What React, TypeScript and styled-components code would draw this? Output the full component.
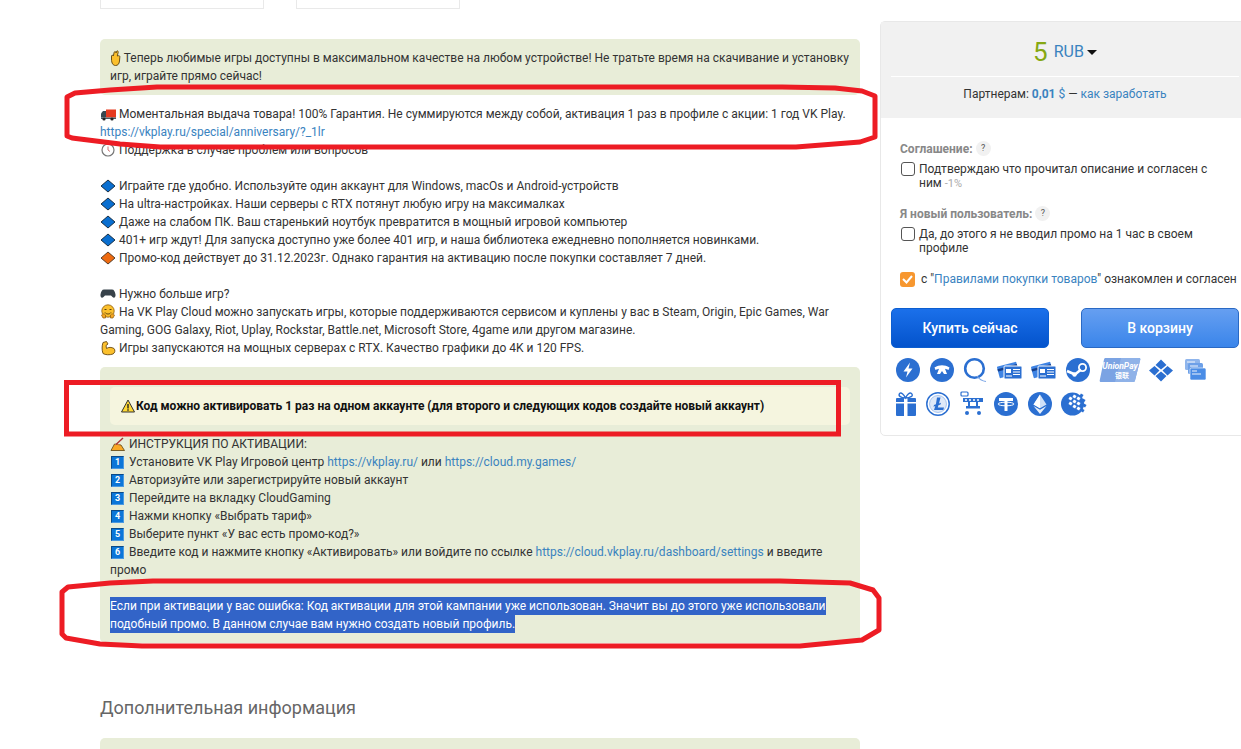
import React from "react";
import styled, { createGlobalStyle } from "styled-components";

const GlobalStyle = createGlobalStyle`
  html, body {
    margin: 0;
    padding: 0;
    background: #fff;
  }
  body {
    font-family: Roboto, "Liberation Sans", sans-serif;
    font-size: 12px;
    line-height: 18px;
    color: #333;
  }
`;

const Page = styled.div`
  position: relative;
  width: 1241px;
  height: 749px;
  overflow: hidden;
  display: flex;
  align-items: flex-start;
  gap: 20px;
  padding-left: 100px;
  box-sizing: border-box;
`;

const Main = styled.main`
  flex: 0 0 760px;
`;

const Tabs = styled.div`
  display: flex;
  gap: 32px;
  height: 9px;
  margin-bottom: 30px;
`;

const Tab = styled.div`
  width: 164px;
  box-sizing: border-box;
  border: 1px solid #e9e9e9;
  border-top: 0;
`;

const GreenBox = styled.div`
  background: #e8edd8;
  border-radius: 5px;
  padding: 10px;
  min-height: 18px;
`;

const Plain = styled.div`
  margin: 10px 0;
`;

const Line = styled.div`
  min-height: 18px;
`;

const A = styled.a`
  color: #3a83bf;
  text-decoration: none;
`;

const Notice = styled.div`
  background: #f5f5df;
  border-radius: 5px;
  padding: 10px;
  margin: 10px 0;
  font-weight: 700;
  color: #111;
`;

const Selected = styled.span`
  display: block;
  width: fit-content;
  background: #3264c8;
  color: #fff;
`;

const Heading = styled.h3`
  margin: 53px 0 18px;
  font-size: 18px;
  line-height: 24px;
  font-weight: 400;
  color: #666;
`;

const Keycap = styled.span`
  display: inline-block;
  width: 13px;
  height: 13px;
  margin: 3px 2px 0 1px;
  box-sizing: border-box;
  background: #0b76d8;
  border: 1px solid #0c4a86;
  border-right-color: #4b99e0;
  border-bottom-color: #4b99e0;
  color: #fff;
  font-size: 9px;
  font-weight: 700;
  line-height: 11px;
  text-align: center;
  vertical-align: top;
`;

const EmojiSvg = styled.svg<{ $narrow?: boolean }>`
  display: inline-block;
  width: ${(p) => (p.$narrow ? 11 : 16)}px;
  height: 16px;
  vertical-align: -4px;
`;

const Side = styled.aside`
  flex: 0 0 370px;
  margin-top: 21px;
  box-sizing: border-box;
  height: 415px;
  border: 1px solid #e8e8e8;
  border-radius: 5px;
`;

const SideHead = styled.div`
  background: #f1f1f1;
  padding: 0 10px;
  height: 96px;
  text-align: center;
`;

const PriceRow = styled.div`
  display: flex;
  align-items: center;
  justify-content: center;
  box-sizing: border-box;
  height: 55px;
  padding-top: 6px;
  border-bottom: 1px solid #fff;
`;

const Price = styled.span`
  font-size: 26px;
  color: #86a813;
  line-height: 30px;
  margin-right: 6px;
`;

const Currency = styled.span`
  font-size: 16px;
  color: #3a83bf;
`;

const Caret = styled.span`
  width: 0;
  height: 0;
  margin-left: 3px;
  border-left: 5px solid transparent;
  border-right: 5px solid transparent;
  border-top: 5px solid #111;
`;

const Partners = styled.div`
  padding-top: 8px;
  line-height: 18px;
`;

const Bold = styled.b`
  color: #3a83bf;
  font-weight: 700;
`;

const SideBody = styled.div`
  padding: 23px 0 0 19px;
`;

const OptionTitle = styled.div`
  display: flex;
  align-items: center;
  gap: 3px;
  height: 15px;
  font-size: 12px;
  font-weight: 700;
  color: #888;
  margin-bottom: 6px;
`;

const Hint = styled.span`
  width: 15px;
  height: 15px;
  border-radius: 50%;
  background: #f1f1f1;
  color: #555;
  font-size: 9px;
  font-weight: 400;
  line-height: 15px;
  text-align: center;
`;

const Option = styled.div`
  display: flex;
  gap: 4px;
  width: 320px;
  line-height: 14px;
  margin-bottom: 15px;
`;

const Box = styled.span`
  flex: 0 0 14px;
  height: 14px;
  margin-left: 1px;
  box-sizing: border-box;
  border: 1px solid #555;
  border-radius: 3px;
  background: #fff;
`;

const Muted = styled.span`
  color: #aaa;
  font-size: 11px;
`;

const AcceptRow = styled.div`
  display: flex;
  align-items: center;
  gap: 6px;
  margin-top: 17px;
  white-space: nowrap;
  line-height: 15px;
`;

const Orange = styled.span`
  flex: 0 0 15px;
  height: 15px;
  border-radius: 3px;
  background: #f7972f;
  display: flex;
  align-items: center;
  justify-content: center;
`;

const Buttons = styled.div`
  display: flex;
  gap: 32px;
  margin: 21px 0 0 -9px;
`;

const Button = styled.button<{ $light?: boolean }>`
  width: 158px;
  height: 40px;
  border-radius: 5px;
  border: 1px solid ${(p) => (p.$light ? "#2a69c4" : "#0c5ed0")};
  background: ${(p) =>
    p.$light
      ? "linear-gradient(#669ff1, #3a85ea)"
      : "linear-gradient(#1b70ea, #0353cc)"};
  color: #fff;
  font-family: Roboto, "Liberation Sans", sans-serif;
  font-size: 14px;
  font-weight: 500;
  padding: 0;
`;

const Pay = styled.div`
  display: flex;
  flex-wrap: wrap;
  row-gap: 10px;
  width: 340px;
  margin: 10px 0 0 -4px;
`;

const PayIcon = styled.svg<{ $wide?: boolean }>`
  display: block;
  width: ${(p) => (p.$wide ? 48 : 34)}px;
  height: 24px;
  flex: none;
  overflow: visible;
`;

const Annotations = styled.svg`
  position: absolute;
  left: 0;
  top: 0;
  width: 1241px;
  height: 749px;
  pointer-events: none;
`;

const emojis: Record<string, React.ReactNode> = {
  hand: (
    <path
      d="M4 9V6c0-1 1.500-1 1.800 0L6.500 3c.2-2 2-2 2 0L9 1.500c.5-1.200 2-.6 1.700.8L9.800 6l1.200-.3c1-.2 1.500.5 1.300 1.500L12 11c-.3 3-1.700 4.500-4 4.500S4 13.500 4 9z"
      fill="#fbc02d"
      stroke="#5b4210"
      strokeWidth="0.9"
    />
  ),
  truck: (
    <>
      <rect x="6" y="3.500" width="10" height="8" fill="#e5391f" />
      <path d="M1 7.500 3 5h3v6.500H1z" fill="#37474f" />
      <rect x="1" y="11.500" width="15" height="1.500" fill="#455a64" />
      <circle cx="4" cy="13" r="1.600" fill="#222" />
      <circle cx="12" cy="13" r="1.600" fill="#222" />
    </>
  ),
  clock: (
    <>
      <circle cx="8" cy="8" r="6" fill="#fff" stroke="#777" strokeWidth="1.200" />
      <path d="M8 4.500V8l2 1.500" fill="none" stroke="#c77" strokeWidth="1" />
    </>
  ),
  blue: <path d="M8 2 15 8l-7 6L1 8z" fill="#0a6fd0" stroke="#123" strokeWidth="0.9" />,
  orange: <path d="M8 2 15 8l-7 6L1 8z" fill="#ee6a10" stroke="#432" strokeWidth="0.9" />,
  pad: (
    <path
      d="M4 3.500h8c2 0 3 2 3.500 5 .4 3-1.500 4-3 2.500L11 9.500H5L3.500 11C2 12.500.1 11.500.5 8.500 1 5.500 2 3.500 4 3.500z"
      fill="#37424a"
    />
  ),
  hug: (
    <>
      <circle cx="8" cy="7" r="6.200" fill="#fbc02d" stroke="#8a5a10" strokeWidth="0.8" />
      <path d="M4.500 5.500h2M9.500 5.500h2" stroke="#5b4210" strokeWidth="1" />
      <path d="M5 8.500c1.500 2 4.500 2 6 0" fill="none" stroke="#5b4210" strokeWidth="1" />
      <path
        d="M1.500 11c1-1.500 3-1.500 4 0v3H3zM14.500 11c-1-1.500-3-1.500-4 0v3H13z"
        fill="#f5a623"
        stroke="#8a5a10"
        strokeWidth="0.7"
      />
    </>
  ),
  arm: (
    <path
      d="M3 2.500 6.500 1.500 8 4 6 5.500 6.500 8.500C8.500 7 11.500 7 14 8.500c1.500 1.500 1 4.500-1 5.500-3.500 1.200-7.500 1-10-.5C1.800 10 1.800 6 3 2.500z"
      fill="#fbc02d"
      stroke="#6b4a10"
      strokeWidth="0.9"
    />
  ),
  warn: (
    <>
      <path d="M8 2 14.500 14H1.500z" fill="#fdd835" stroke="#333" strokeWidth="1" strokeLinejoin="round" />
      <path d="M8 6v4.500M8 11.300v1.500" stroke="#222" strokeWidth="1.400" />
    </>
  ),
  write: (
    <>
      <path d="M1 14.500 4.500 8l6.500 1 3.500 5.500z" fill="#f9a825" stroke="#5b4210" strokeWidth="0.8" />
      <path d="M5 9c2-1 3-1 5 .5" fill="none" stroke="#d84" strokeWidth="1" />
      <path d="M6 8.500 13 2" stroke="#a33" strokeWidth="1.400" />
    </>
  ),
};

const Emoji = ({ name }: { name: string }) => (
  <EmojiSvg viewBox={name === "hand" ? "2.500 0 11 16" : "0 0 16 16"} $narrow={name === "hand"}>
    {emojis[name]}
  </EmojiSvg>
);

const blue = "#2b6fd1";

const Cards = () => (
  <>
    <g transform="rotate(-15 10 12)">
      <rect x="0" y="6" width="20" height="12" rx="1" fill="#3f84e4" />
      <rect x="0" y="8.500" width="20" height="2.500" fill="#163f8a" />
    </g>
    <rect x="6" y="8" width="18" height="13" rx="1" fill={blue} stroke="#fff" strokeWidth="1" />
    <rect x="8" y="11" width="5" height="4" fill="#fff" />
    <path d="M15 11.500h7M15 14h7M15 16.500h7M8 18h6" stroke="#fff" strokeWidth="1" />
  </>
);

const moneyDots: [number, number, boolean][] = [
  [8, 5, true],
  [12, 3, true],
  [16, 5, true],
  [8, 10, true],
  [12, 8, true],
  [16, 10, true],
  [12, 13, true],
  [16, 15, true],
  [19, 2, false],
  [21, 7, false],
  [22, 12, false],
  [20, 17, false],
];

const payIcons: { wide?: boolean; body: React.ReactNode }[] = [
  {
    body: (
      <>
        <circle cx="12" cy="12" r="12" fill={blue} />
        <path d="M14 4.500 7.500 13.500h4L10 19.500l6.500-9h-4z" fill="#fff" />
      </>
    ),
  },
  {
    body: (
      <>
        <circle cx="12" cy="12" r="12" fill={blue} />
        <path
          d="M4.500 9.500c5-3 10-3 15 0l-1 2.500c-1.500-.8-2.500-1.200-3.500-1.300L17 16h-3l-2-3-2 3H7l2-5.300c-1 .1-2 .5-3.500 1.300z"
          fill="#fff"
        />
      </>
    ),
  },
  {
    body: (
      <>
        <circle cx="10.500" cy="10.500" r="9.300" fill="none" stroke={blue} strokeWidth="2.600" />
        <path d="M13 18c2 3 5 5 9 5.500" fill="none" stroke="#7ba6e6" strokeWidth="1.200" />
      </>
    ),
  },
  { body: <Cards /> },
  { body: <Cards /> },
  {
    body: (
      <>
        <circle cx="12" cy="12" r="12" fill={blue} />
        <path d="M1 13 9 16.500l6-5" fill="none" stroke="#fff" strokeWidth="2.600" />
        <circle cx="16.500" cy="9.500" r="3.600" fill="none" stroke="#fff" strokeWidth="1.800" />
        <circle cx="8.500" cy="16.500" r="2.200" fill="#fff" />
      </>
    ),
  },
  {
    wide: true,
    body: (
      <g transform="translate(-5 0)">
        <path
          d="M10.500 0H44c1 0 1.500.6 1.300 1.500L40 22.500c-.3 1-1 1.500-2 1.500H6c-1 0-1.500-.6-1.300-1.500L9 1.500C9.200.6 9.700 0 10.500 0z"
          fill="#7ba3e3"
        />
        <path d="M26 0H44c1 0 1.500.6 1.300 1.500L40 22.500c-.3 1-1 1.500-2 1.500H20z" fill="#8fb2e8" />
        <text x="25" y="11" fontFamily="Roboto, sans-serif" fontSize="8.500" fontStyle="italic" fontWeight="700" fill="#fff" textAnchor="middle">
          UnionPay
        </text>
        <text x="27" y="20" fontFamily="'Noto Sans CJK SC', sans-serif" fontSize="7" fontWeight="700" fill="#fff" textAnchor="middle">
          银联
        </text>
      </g>
    ),
  },
  {
    body: (
      <g transform="translate(1 0)">
        <path
          d="M12 1.500 17.500 7 12 11.500 6.500 7zM5.500 8 10.500 12.500 5.500 17.500 0 12.500zM18.500 8 24 12.500 18.500 17.500 13.500 12.500zM12 13.500 17.500 18 12 23.500 6.500 18z"
          fill={blue}
        />
      </g>
    ),
  },
  {
    body: (
      <g transform="translate(0 1)">
        <rect x="3" y="0" width="15" height="11" rx="1.500" fill="#8fb5ec" />
        <rect x="6" y="4" width="15" height="11" rx="1.500" fill="#6da0e8" />
        <rect x="8" y="9" width="16" height="12" rx="1.500" fill="#4a8de6" stroke="#fff" strokeWidth="0.6" />
        <path d="M10 12h5M10 15h9M5 3h8M8 7h8" stroke="#fff" strokeWidth="0.9" />
      </g>
    ),
  },
  {
    body: (
      <>
        <rect x="0" y="6" width="20" height="18" rx="1" fill={blue} />
        <rect x="0" y="10" width="20" height="1.500" fill="#fff" />
        <rect x="8" y="6" width="3.500" height="18" fill="#fff" />
        <path
          d="M9.500 6C5 6 2 4 3.500 1.500 5.500 0 8 3 9.500 6c1.500-3 4-6 6-4.500C18 4 14 6 9.500 6z"
          fill="none"
          stroke={blue}
          strokeWidth="1.400"
        />
      </>
    ),
  },
  {
    body: (
      <g transform="translate(-4 0)">
        <circle cx="12" cy="12" r="11.200" fill="#fff" stroke={blue} strokeWidth="1.500" />
        <circle cx="12" cy="12" r="8.500" fill="#dfe9f8" stroke="#7ba6e6" strokeWidth="0.6" />
        <path d="M11 5.500h3.500L13 11.500l2-.8-.5 1.800-2.100.8-.6 2.200H18l-.7 2.500H8l1.300-4-1.800.7.500-1.700 1.900-.8z" fill={blue} />
      </g>
    ),
  },
  {
    body: (
      <g transform="translate(-6 0)">
        <rect x="3" y="0" width="7" height="4" rx="1" fill="none" stroke={blue} strokeWidth="1.200" />
        <rect x="5" y="6" width="20" height="4" fill={blue} />
        <path d="M7 8h2M11 8h2M15 8h2M19 8h2" stroke="#fff" strokeWidth="1.300" />
        <rect x="8" y="14" width="14" height="2.500" fill={blue} />
        <rect x="10" y="10" width="2" height="4" fill={blue} />
        <rect x="18" y="10" width="2" height="4" fill={blue} />
        <circle cx="9" cy="21" r="2" fill={blue} />
        <circle cx="21" cy="21" r="2" fill={blue} />
      </g>
    ),
  },
  {
    body: (
      <g transform="translate(-4 0)">
        <circle cx="12" cy="12" r="12" fill={blue} />
        <path d="M5 6h14v3h-5.500v10h-3V9H5z" fill="#fff" />
        <ellipse cx="12" cy="12" rx="8" ry="1.800" fill="none" stroke="#fff" strokeWidth="1" />
      </g>
    ),
  },
  {
    body: (
      <g transform="translate(-4 0)">
        <circle cx="12" cy="12" r="12" fill={blue} />
        <path d="M12 2.500 18.500 12.500 12 16.300 5.500 12.500z" fill="#cfe0f8" />
        <path d="M12 2.500V16.300L5.500 12.500z" fill="#fff" />
        <path d="M12 17.800 18.500 14 12 22 5.500 14z" fill="#e8f0fb" />
      </g>
    ),
  },
  {
    body: (
      <g transform="translate(-5 0)">
        <circle cx="11.500" cy="12" r="11.500" fill={blue} />
        {moneyDots.map(([x, y, inside]) => (
          <rect
            key={`${x}-${y}`}
            x={x}
            y={y}
            width="3"
            height="3"
            fill={inside ? "#fff" : blue}
            transform={`rotate(30 ${x + 1.500} ${y + 1.500})`}
          />
        ))}
      </g>
    ),
  },
];

const steps = [
  <>
    Установите VK Play Игровой центр <A>https://vkplay.ru/</A> или <A>https://cloud.my.games/</A>
  </>,
  <>Авторизуйте или зарегистрируйте новый аккаунт</>,
  <>Перейдите на вкладку CloudGaming</>,
  <>Нажми кнопку «Выбрать тариф»</>,
  <>Выберите пункт «У вас есть промо-код?»</>,
  <>
    Введите код и нажмите кнопку «Активировать» или войдите по ссылке{" "}
    <A>https://cloud.vkplay.ru/dashboard/settings</A> <span>и введите</span> <span>промо</span>
  </>,
];

const features: [string, string][] = [
  ["blue", "Играйте где удобно. Используйте один аккаунт для Windows, macOs и Android-устройств"],
  ["blue", "На ultra-настройках. Наши серверы с RTX потянут любую игру на максималках"],
  ["blue", "Даже на слабом ПК. Ваш старенький ноутбук превратится в мощный игровой компьютер"],
  ["blue", "401+ игр ждут! Для запуска доступно уже более 401 игр, и наша библиотека ежедневно пополняется новинками."],
  ["orange", "Промо-код действует до 31.12.2023г. Однако гарантия на активацию после покупки составляет 7 дней."],
];

export default function App() {
  return (
    <>
      <GlobalStyle />
      <Page>
        <Main>
          <Tabs>
            <Tab />
            <Tab />
          </Tabs>

          <GreenBox>
            <Emoji name="hand" /> Теперь любимые игры доступны в максимальном качестве на любом устройстве! Не
            тратьте время на скачивание и установку игр, играйте прямо сейчас!
          </GreenBox>

          <Plain>
            <Line>
              <Emoji name="truck" /> Моментальная выдача товара! 100% Гарантия. Не суммируются между собой, активация 1
              раз в профиле с акции: 1 год VK Play.
            </Line>
            <Line>
              <A>https://vkplay.ru/special/anniversary/?_1lr</A>
            </Line>
            <Line>
              <Emoji name="clock" /> Поддержка в случае проблем или вопросов
            </Line>
            <Line />
            {features.map(([icon, text]) => (
              <Line key={text}>
                <Emoji name={icon} /> {text}
              </Line>
            ))}
            <Line />
            <Line>
              <Emoji name="pad" /> Нужно больше игр?
            </Line>
            <Line>
              <Emoji name="hug" /> На VK Play Cloud можно запускать игры, которые поддерживаются сервисом и куплены у
              вас в Steam, Origin, Epic Games, War Gaming, GOG Galaxy, Riot, Uplay, Rockstar, Battle.net, Microsoft
              Store, 4game или другом магазине.
            </Line>
            <Line>
              <Emoji name="arm" /> Игры запускаются на мощных серверах с RTX. Качество графики до 4K и 120 FPS.
            </Line>
          </Plain>

          <GreenBox>
            <Notice>
              <Emoji name="warn" />
              Код можно активировать 1 раз на одном аккаунте (для второго и следующих кодов создайте новый аккаунт)
            </Notice>
            <Line>
              <Emoji name="write" /> ИНСТРУКЦИЯ ПО АКТИВАЦИИ:
            </Line>
            {steps.map((step, i) => (
              <Line key={i}>
                <Keycap>{i + 1}</Keycap> {step}
              </Line>
            ))}
            <Line />
            <Selected>
              Если при активации у вас ошибка: Код активации для этой кампании уже использован. Значит вы до этого уже
              использовали
            </Selected>
            <Selected>подобный промо. В данном случае вам нужно создать новый профиль.</Selected>
          </GreenBox>

          <Heading>Дополнительная информация</Heading>
          <GreenBox />
        </Main>

        <Side>
          <SideHead>
            <PriceRow>
              <Price>5</Price>
              <Currency>RUB</Currency>
              <Caret />
            </PriceRow>
            <Partners>
              Партнерам: <Bold>0,01</Bold> <A>$</A> — <A>как заработать</A>
            </Partners>
          </SideHead>
          <SideBody>
            <OptionTitle>
              Соглашение: <Hint>?</Hint>
            </OptionTitle>
            <Option>
              <Box />
              <span>
                <span>Подтверждаю что прочитал описание и согласен с</span> <span>ним</span> <Muted>-1%</Muted>
              </span>
            </Option>
            <OptionTitle>
              Я новый пользователь: <Hint>?</Hint>
            </OptionTitle>
            <Option>
              <Box />
              <span>Да, до этого я не вводил промо на 1 час в своем профиле</span>
            </Option>
            <AcceptRow>
              <Orange>
                <svg width="11" height="9" viewBox="0 0 11 9">
                  <path d="M1 4l3.500 3.500L10 1" fill="none" stroke="#fff" strokeWidth="2" />
                </svg>
              </Orange>
              <span>
                с "<A>Правилами покупки товаров</A>" ознакомлен и согласен
              </span>
            </AcceptRow>
            <Buttons>
              <Button>Купить сейчас</Button>
              <Button $light>В корзину</Button>
            </Buttons>
            <Pay>
              {payIcons.map((icon, i) => (
                <PayIcon key={i} $wide={icon.wide} viewBox={icon.wide ? "0 0 48 24" : "0 0 34 24"}>
                  {icon.body}
                </PayIcon>
              ))}
            </Pay>
          </SideBody>
        </Side>

        <Annotations viewBox="0 0 1241 749">
          <g fill="none" stroke="#ed1c24" strokeWidth="5" strokeLinejoin="round">
            <path d="M157 87H782L835 88 862 91 875 96V137L860 142 796 147H160L120 144 72 138 67 136V97L75 93 110 90z" />
            <rect x="66.500" y="382.500" width="772" height="51.500" strokeLinejoin="miter" />
            <path d="M153 581H780L850 583 873 590 879 598V630L862 640 800 646H142L100 644 66 638 62 634V592L68 587 110 583z" />
          </g>
        </Annotations>
      </Page>
    </>
  );
}
